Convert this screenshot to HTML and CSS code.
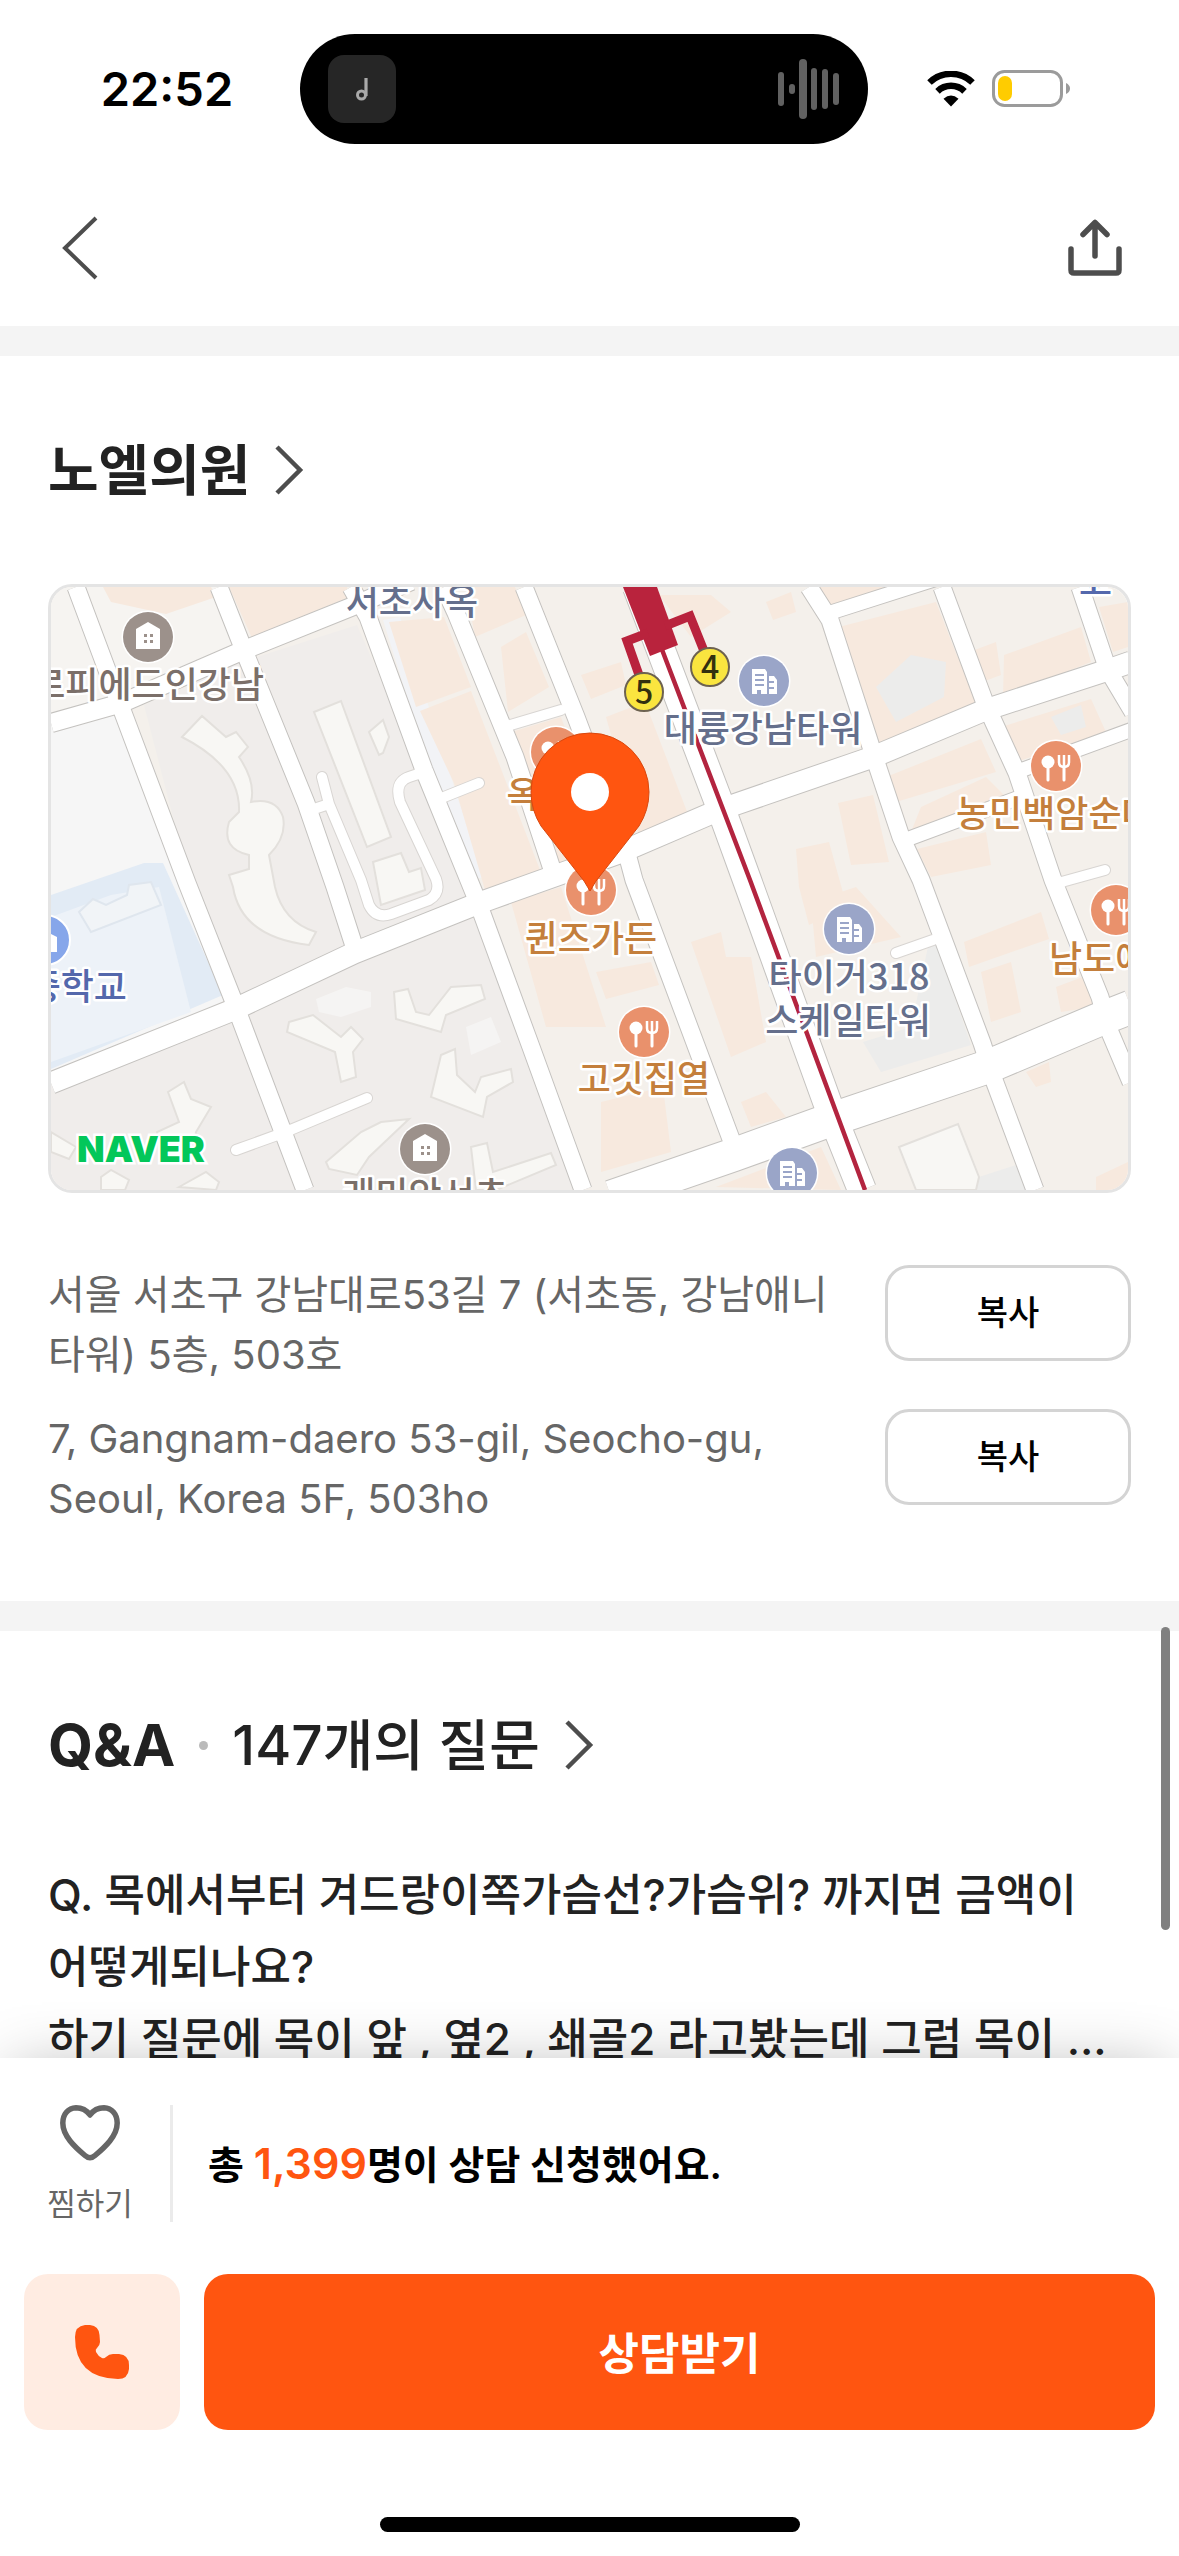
FILE: index.html
```html
<!DOCTYPE html>
<html lang="ko">
<head>
<meta charset="utf-8">
<meta name="viewport" content="width=device-width, initial-scale=1">
<title>노엘의원</title>
<link rel="stylesheet" href="styles.css">
</head>
<body>
<div class="screen">
  <div class="status">
    <time class="status-time">22:52</time>
    <div class="island">
      <span class="island-art">
        <svg width="12" height="24" viewBox="0 0 12 24" fill="none" stroke="#a9a9a9" stroke-width="3"><circle cx="5.500" cy="18" r="4"/><path d="M10 19V1" stroke-width="3.200"/></svg>
      </span>
      <svg width="62" height="60" viewBox="0 0 62 60" fill="#616161">
        <rect x="0" y="13" width="6" height="34" rx="3"/><rect x="11" y="25" width="6" height="10" rx="3"/><rect x="21" y="0" width="8" height="60" rx="4"/><rect x="33" y="9" width="6" height="42" rx="3"/><rect x="44" y="10" width="6" height="40" rx="3"/><rect x="55" y="14" width="6" height="32" rx="3"/>
      </svg>
    </div>
    <div class="status-icons">
      <svg width="48" height="36" viewBox="0 0 48 36"><g fill="none" stroke="#000"><path d="M2.500 11.500A31 31 0 0 1 45.500 11.500" stroke-width="6.500"/><path d="M10.500 20.300A19.500 19.500 0 0 1 37.500 20.300" stroke-width="6.500"/></g><path d="M24 35.500L16.500 27.800Q24 21 31.500 27.800Z"/></svg>
      <svg width="79" height="38" viewBox="0 0 79 38"><rect x="1.500" y="1.500" width="68" height="34" rx="11" fill="none" stroke="#9b9b9b" stroke-width="3"/><rect x="6" y="6" width="14" height="25" rx="7" fill="#fc0"/><path d="M74 13Q78 15 78 18.500T74 24Z" fill="#9b9b9b"/></svg>
    </div>
  </div>

  <header class="topbar">
    <button class="icon-button" type="button" aria-label="뒤로">
      <svg width="38" height="64" viewBox="0 0 38 64" fill="none" stroke="#4d4d4d" stroke-width="4"><path d="M35 2L4 32L35 62"/></svg>
    </button>
    <button class="icon-button" type="button" aria-label="공유">
      <svg width="54" height="58" viewBox="0 0 54 58" fill="none" stroke="#4d4d4d" stroke-width="5.500" stroke-linecap="round" stroke-linejoin="round"><path d="M3 30V51Q3 54 6 54H48Q51 54 51 51V30M27 37V4M15 15.500L27 3.500L39 15.500"/></svg>
    </button>
  </header>

  <main class="content">
    <section class="section">
      <h2 class="title"><a class="title-link" href="#clinic"><strong>노엘의원</strong>
        <svg class="title-arrow" width="30" height="50" viewBox="0 0 30 50" fill="none" stroke="#4d4d4d" stroke-width="4.500"><path d="M3 2L26 25L3 48"/></svg></a></h2>

      <div class="map">
        <svg class="map-art" viewBox="0 0 1077 603" role="img" aria-label="노엘의원 위치 지도">
          <defs>
            <g id="food"><circle r="26.500" fill="#fff"/><circle r="25" fill="#e9916c"/><circle cx="-8" cy="-4" r="6.500" fill="#fff"/><path d="M-8 0V14M8 0V14" stroke="#fff" stroke-width="3" stroke-linecap="round"/><path d="M3 -11V-4Q3 1 8 1T13 -4V-11M8 -11V0" fill="none" stroke="#fff" stroke-width="2.500"/></g>
            <g id="house"><circle r="26.500" fill="#fff"/><circle r="25" fill="#9c918b"/><path d="M-12 12V-8L0 -15L12 -8V12Z" fill="#fff"/><path d="M-4 -3h3v3h-3zM2 -3h3v3h-3zM-4 3h3v3h-3zM2 3h3v3h-3z" fill="#9c918b"/></g>
            <g id="tower"><circle r="26.500" fill="#fff"/><circle r="25" fill="#9aa5c8"/><path d="M-12 13V-12H1L3 -9V13H-3V9H-7V13ZM5 13V-5H10L13 -1V13Z" fill="#fff"/><path d="M-9 -6H0M-9 -1H0M-9 4H0M5 1H10M5 7H10" stroke="#9aa5c8" stroke-width="2"/></g>
            <g id="roads" fill="none">
              <path d="M25 0L71 123L136 296L181 410L254 603M168 0L194 66L255 216L284 300L304 362M300 0L317 30L373 183L426 313L480 460L532 603M393 0L405 26L464 170L503 288M473 0L525 130L575 263L583 293L683 560M758 0L779 33L822 166L850 250L870 293L931 456L943 493L984 603M891 0L934 116L966 186L1002 293L1049 410L1058 443L1080 495M1029 0L1057 83L1082 125"/>
            </g>
          </defs>
          <rect width="1077" height="603" fill="#f4f0eb"/>
          <path d="M0 0H168L194 66L0 136Z" fill="#f6f4f1"/>
          <path d="M0 136L71 120L136 296L181 410L0 496Z" fill="#f6f6f6"/>
          <path d="M0 308L93 276L112 276L172 408L0 482Z" fill="#e2ebf5"/>
          <path d="M0 330L60 308L108 300L140 425L0 475Z" fill="#edf2f8"/>
          <path d="M93 118L193 70L305 365L183 418L140 300Z" fill="#f0edeb"/>
          <path d="M206 70L306 38L425 310L306 362L255 216Z" fill="#f0edeb"/>
          <path d="M182 423L428 316L532 603H254Z" fill="#f0edeb"/>
          <path d="M0 496L182 430L254 603H0Z" fill="#f0edeb"/>
          <path d="M332 33L349 30L432 290L414 296Z" fill="#f2f3f6"/>
          <g fill="#f7e9de">
            <path d="M52 0H160L165 10L115 27L60 15ZM178 0H296L298 10L201 51ZM338 35L393 30L420 100L365 120ZM369 124L420 104L489 283L434 303L403 196ZM415 0H464L475 28L424 50ZM450 60L475 45L498 100L457 125ZM457 146L510 130L560 268L510 285Z"/>
            <path d="M608 8H660L680 25L640 50ZM715 15L740 5L745 25L722 33ZM768 0H880L775 22ZM780 42L885 15L926 120L828 158ZM905 70L945 55L950 88L918 100ZM953 68L1030 40L1040 75L952 110ZM950 140L1040 112L1055 145L965 175ZM1048 20L1077 15V60L1062 65ZM530 88L570 75L575 98L540 112ZM555 130L594 115L640 235L590 255ZM835 190L930 152L945 185L845 215ZM870 220L935 190L955 210L860 245Z"/>
            <path d="M787 216L822 208L838 275L800 278ZM745 262L778 255L796 320L758 338L748 300ZM760 315L805 300L850 350L765 370ZM866 262L935 245L940 278L880 290ZM913 355L990 325L998 352L918 380ZM930 385L960 375L970 425L940 435ZM1005 400L1045 385L1042 420L1010 425ZM640 355L670 345L675 370L700 370L715 455L680 470ZM460 315L510 300L555 440L495 440ZM545 385L600 375L608 398L555 412ZM550 515L612 500L620 565L550 585ZM690 515L715 505L735 530L700 540ZM975 485L998 475L1000 495L985 500ZM665 600L770 560L790 603ZM1045 590L1077 575V603H1045Z"/>
          </g>
          <g fill="#ececeb">
            <path d="M825 100L860 68L895 75L893 110L845 135ZM878 355L883 350L920 458L830 485L812 455L860 440ZM928 590L965 578L975 603H925ZM1000 130L1030 118L1035 140L1010 148Z"/>
          </g>
          <g fill="#f8f7f4" stroke="#e3e0dc" stroke-width="2">
            <path d="M131 150L151 129L175 150L185 145L197 160L188 170Q205 195 200 215Q225 210 232 230Q236 250 218 268L224 300Q232 335 265 345L258 358Q190 350 182 300L178 288L198 282V268Q170 262 178 235L188 225Q190 180 131 150Z"/>
            <path d="M263 125L290 114L340 250L316 260ZM318 145L332 133L338 150L332 166L328 168ZM322 275L350 266L358 285L370 281L374 303L330 318Z"/>
            <path d="M238 435L262 428L290 450L300 440L312 452L302 465L305 490L290 495L284 465L236 445ZM343 405L357 402L365 425L378 428L400 400L430 398L434 412L395 428L390 445L345 432ZM390 468L404 462L406 488L424 505L430 490L460 482L462 495L436 510L432 530L380 510ZM275 575L310 545L330 535L358 532L318 570L306 588L278 582ZM420 560L436 556L442 585L500 566L505 578L445 603H425ZM117 505L133 495L140 512L160 520L145 545L140 570L110 565L106 545L128 535ZM0 545L25 560L18 572L0 565ZM50 590L60 583L78 593L74 603H50ZM128 600L155 585L168 595L165 603Z"/>
            <path d="M848 560L907 537L928 590L925 603H865Z"/>
            <path d="M28 325L42 312L55 318L76 308L78 298L100 295L110 318L40 345Z" fill="#f1f4f7" stroke="#dfe6ee"/>
          </g>
          <path d="M265 412L295 400L320 405L320 420L290 430L268 425ZM415 440L440 430L450 455L420 468Z" fill="#f5f4f3"/>

          <g stroke="#c4c2bf" stroke-width="19"><use href="#roads"/></g>
          <g fill="none" stroke="#c4c2bf">
            <path d="M0 136L71 116L193 63L300 20L360 -6" stroke-width="20"/>
            <path d="M0 496L182 423L303 366L428 316L568 266L668 223L822 170L934 123L1057 83L1080 75" stroke-width="23"/>
            <path d="M560 610L682 568L779 533L936 480L1047 433L1080 420" stroke-width="35"/>
            <path d="M586 0L668 216L696 293L779 523L811 603" stroke-width="30"/>
            <path d="M775 27L891 -10M854 253L975 208M968 184L1080 143" stroke-width="16"/>
            <path d="M845 366L882 353M453 140L510 123M260 223L278 217M271 190L278 217L310 293L318 318Q325 332 340 327L378 313Q390 306 385 292L349 215Q343 195 358 190L373 185M393 210L428 196M185 563L232 546L316 511M1007 296L1054 283" stroke="#d8d5d2" stroke-width="12" stroke-linecap="round"/>
          </g>
          <g stroke="#fff" stroke-width="17"><use href="#roads"/></g>
          <g fill="none" stroke="#fff">
            <path d="M0 136L71 116L193 63L300 20L360 -6" stroke-width="18"/>
            <path d="M0 496L182 423L303 366L428 316L568 266L668 223L822 170L934 123L1057 83L1080 75" stroke-width="21"/>
            <path d="M560 610L682 568L779 533L936 480L1047 433L1080 420" stroke-width="33"/>
            <path d="M586 0L668 216L696 293L779 523L811 603" stroke-width="28"/>
            <path d="M775 27L891 -10M854 253L975 208M968 184L1080 143" stroke-width="14"/>
            <path d="M845 366L882 353M453 140L510 123M260 223L278 217M271 190L278 217L310 293L318 318Q325 332 340 327L378 313Q390 306 385 292L349 215Q343 195 358 190L373 185M393 210L428 196M185 563L232 546L316 511M1007 296L1054 283" stroke-width="10" stroke-linecap="round"/>
          </g>

          <path d="M610 60L699 293L814 603" fill="none" stroke="#b3243f" stroke-width="4.500"/>
          <path d="M572 0H606L627 58L599 69Z" fill="#b9233d"/>
          <path d="M614 39L639 29L653 64M597 46L576 54L588 88" fill="none" stroke="#b9233d" stroke-width="9"/>
          <g fill="#fae53f" stroke="#6d6250" stroke-width="2"><circle cx="593" cy="105" r="19"/><circle cx="659" cy="80" r="19"/></g>

          <use href="#house" x="97" y="50"/><use href="#house" x="374" y="562"/>
          <use href="#tower" x="713" y="94"/><use href="#tower" x="798" y="342"/><use href="#tower" x="741" y="586"/>
          <use href="#food" x="1005" y="179"/><use href="#food" x="593" y="445"/><use href="#food" x="1065" y="323"/><use href="#food" x="540" y="303"/><use href="#food" x="505" y="165"/>
          <circle cx="-6" cy="353" r="25" fill="#86a6ea" stroke="#fff" stroke-width="2"/><path d="M-18 365V352L-6 344L6 350V365Z" fill="#fff"/>

          <g class="map-text">
            <g fill="#33300f" text-anchor="middle" class="map-exit"><text x="593" y="117">5</text><text x="659" y="92">4</text></g>
            <g class="map-halo" text-anchor="middle">
              <g fill="#656f8c"><text x="361" y="28">서초사옥</text><text x="712" y="155">대륭강남타워</text><text x="798" y="403">타이거318</text><text x="797" y="447">스케일타워</text></g>
              <g fill="#7b6f69"><text x="213" y="111" text-anchor="end">르피에드인강남</text><text x="374" y="621">래미안서초</text></g>
              <g fill="#c47f3c"><text x="472" y="221">옥</text><text x="540" y="365">퀸즈가든</text><text x="593" y="505">고깃집열</text><text x="905" y="240" text-anchor="start">농민백암순대</text><text x="998" y="385" text-anchor="start">남도애</text></g>
              <g fill="#5468ac"><text x="76" y="413" text-anchor="end">중학교</text><text x="1028" y="8" text-anchor="start">고</text></g>
            </g>
            <text class="map-brand" x="26" y="575">NAVER</text>
          </g>
          <path d="M539 304L533 294L490 239Q480 223 480 205A59 59 0 0 1 598 205Q598 223 588 239L545 294Z" fill="#ff5510" stroke="#d9480f"/>
          <circle cx="539" cy="205" r="19" fill="#fff"/>
        </svg>
      </div>

      <div class="address">
        <p class="address-text">서울 서초구 강남대로53길 7 (서초동, 강남애니타워) 5층, 503호</p>
        <button class="copy" type="button">복사</button>
      </div>
      <div class="address">
        <p class="address-text" lang="en">7, Gangnam-daero 53-gil, Seocho-gu, Seoul, Korea 5F, 503ho</p>
        <button class="copy" type="button">복사</button>
      </div>
    </section>

    <section class="section">
      <h2 class="title"><a class="title-link" href="#qna"><strong class="title-latin">Q&amp;A</strong><span class="dot"></span><span class="title-count">147개의 질문</span>
        <svg class="title-arrow" width="30" height="50" viewBox="0 0 30 50" fill="none" stroke="#4d4d4d" stroke-width="4.500"><path d="M3 2L26 25L3 48"/></svg></a></h2>
      <p class="question">Q. 목에서부터 겨드랑이쪽가슴선?가슴위? 까지면 금액이 어떻게되나요?</p>
      <p class="question question-more">하기 질문에 목이 앞 , 옆2 , 쇄골2 라고봤는데 그럼 목이 ...</p>
    </section>
    <div class="scrollbar"></div>
  </main>

  <footer class="dock">
    <div class="dock-info">
      <button class="like" type="button">
        <svg width="60" height="57" viewBox="0 0 60 57" fill="none" stroke="#666" stroke-width="5.500" stroke-linejoin="round"><path d="M30 10C25 3 19 2.800 16 2.800C8 3 2.800 9.500 2.800 18C2.800 31 15 42 25 50.500Q30 55 35 50.500C45 42 57.200 31 57.200 18C57.200 9.500 52 3 44 2.800C41 2.800 35 3 30 10Z"/></svg>
        <span>찜하기</span>
      </button>
      <p class="dock-text">총 <em>1,399</em>명이 상담 신청했어요.</p>
    </div>
    <div class="dock-actions">
      <button class="call" type="button" aria-label="전화">
        <svg width="54" height="54" viewBox="0 0 54 54" fill="#ff5510"><path d="M10 0H15Q24 1 24.500 10L25 17Q25 20 22 23Q20 24.500 21 27Q23 31 27 33Q29 34 31 32Q34 29 38 29H44Q54 30 54 40V44Q53 54 43 54Q0 53 0 12Q0 1 10 0Z"/></svg>
      </button>
      <button class="cta" type="button">상담받기</button>
    </div>
    <div class="home-indicator"></div>
  </footer>
</div>
</body>
</html>
```
FILE: styles.css
```css
* { box-sizing: border-box; margin: 0; padding: 0; }

body {
  background: #fff;
  color: #222;
  font-family: Inter, "Noto Sans CJK KR", sans-serif;
}

button {
  border: 0;
  background: none;
  color: inherit;
  font-family: inherit;
}

a { color: inherit; text-decoration: none; }
svg { display: block; }

.screen {
  display: flex;
  flex-direction: column;
  height: 100vh;
  overflow: hidden;
}

/* status bar */
.status {
  display: grid;
  grid-template-columns: 1fr 568px 1fr;
  flex: none;
  height: 172px;
  padding: 34px 11px 28px 0;
}

.status-time {
  align-self: center;
  padding-left: 34px;
  color: #000;
  font-size: 47px;
  font-weight: 600;
  line-height: 56px;
  text-align: center;
}

.island {
  display: flex;
  align-items: center;
  justify-content: space-between;
  padding: 0 28px;
  border-radius: 55px;
  background: #000;
}

.island-art {
  display: grid;
  place-items: center;
  width: 68px;
  height: 68px;
  border-radius: 16px;
  background: #262626;
}

.status-icons {
  display: flex;
  align-items: center;
  justify-content: center;
  gap: 17px;
  padding-right: 38px;
}

/* top bar */
.topbar {
  display: flex;
  align-items: center;
  justify-content: space-between;
  flex: none;
  height: 154px;
  padding: 0 57px 2px 61px;
}

/* scrolling content */
.content {
  position: relative;
  flex: 1;
  min-height: 0;
  overflow: hidden;
}

.section {
  padding: 0 48px 72px;
  border-top: 30px solid #f4f4f4;
}

.title {
  font-size: 55px;
  font-weight: 500;
  line-height: 84px;
  padding: 72px 0;
}

.title-link {
  display: flex;
  align-items: center;
  height: 84px;
}

.title strong { font-weight: 700; }
.title-latin { font-size: 58px; }
.title-arrow { margin-left: 24px; }

.dot {
  width: 9px;
  height: 9px;
  margin: 0 24px;
  border-radius: 50%;
  background: #bbb;
}

.map {
  overflow: hidden;
  border: 3px solid #e4e4e4;
  border-radius: 24px;
  margin-bottom: 72px;
}

.map-art { width: 100%; height: auto; }

.map-text {
  font-family: "Noto Sans CJK KR", sans-serif;
  font-size: 36px;
  font-weight: 500;
}

.map-exit { font-size: 32px; }

.map-halo text {
  stroke: #fff;
  stroke-width: 5px;
  stroke-linejoin: round;
  paint-order: stroke;
}

.map-brand {
  fill: #03c75a;
  stroke: #fff;
  stroke-width: 5px;
  paint-order: stroke;
  font-family: Inter, sans-serif;
  font-weight: 900;
}

.address {
  display: flex;
  align-items: flex-start;
  justify-content: space-between;
  gap: 48px;
}

.address + .address { margin-top: 24px; }

.address-text {
  flex: 1;
  color: #666;
  font-size: 40px;
  line-height: 60px;
}

.copy {
  flex: none;
  width: 246px;
  height: 96px;
  padding-bottom: 6px;
  border: 3px solid #d4d4d4;
  border-radius: 24px;
  color: #000;
  font-size: 34px;
  font-weight: 500;
}

.question {
  font-size: 44px;
  font-weight: 500;
  line-height: 72px;
  word-break: keep-all;
}

.question-more { white-space: nowrap; }

.scrollbar {
  position: absolute;
  top: 1301px;
  right: 9px;
  width: 9px;
  height: 303px;
  border-radius: 5px;
  background: #808080;
}

/* bottom dock */
.dock {
  position: relative;
  flex: none;
  padding: 47px 24px 24px;
  background: #fff;
  box-shadow: 0 0 60px -12px rgba(0, 0, 0, 0.3);
}

.dock-info {
  display: flex;
  height: 117px;
  margin-bottom: 52px;
}

.like {
  display: flex;
  flex-direction: column;
  align-items: center;
  justify-content: space-between;
  width: 149px;
  padding-right: 14px;
  border-right: 3px solid #ebebeb;
  color: #666;
  font-size: 31px;
  line-height: 36px;
}

.dock-text {
  align-self: center;
  padding-left: 35px;
  color: #000;
  font-size: 39px;
  font-weight: 600;
  line-height: 60px;
}

.dock-text em {
  color: #ff5510;
  font-size: 43px;
  font-style: normal;
}

.dock-actions { display: flex; gap: 24px; }

.call, .cta {
  height: 156px;
  border-radius: 24px;
}

.call {
  display: grid;
  place-items: center;
  width: 156px;
  background: #ffece2;
}

.cta {
  flex: 1;
  padding-bottom: 3px;
  background: #ff5510;
  color: #fff;
  font-size: 44px;
  font-weight: 600;
}

.home-indicator {
  width: 420px;
  height: 15px;
  margin: 87px auto 0;
  border-radius: 8px;
  background: #000;
}
```
